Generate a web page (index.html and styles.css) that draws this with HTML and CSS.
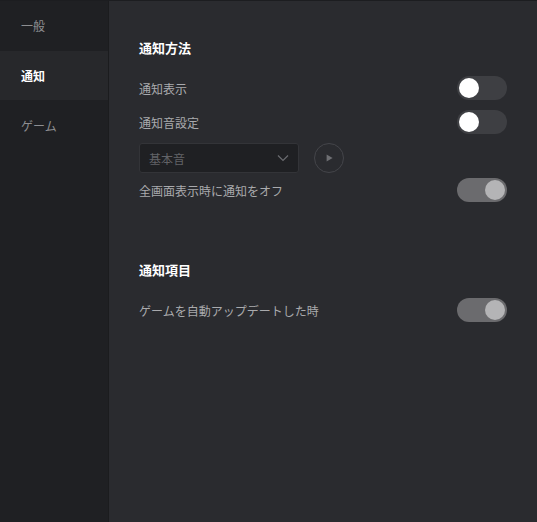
FILE: index.html
```html
<!DOCTYPE html>
<html lang="ja">
<head>
<meta charset="UTF-8" />
<meta name="viewport" content="width=device-width, initial-scale=1" />
<title>設定</title>
<link rel="stylesheet" href="styles.css">
</head>
<body>

<div class="app">
  <div class="sidebar">
    <div class="nav-item">一般</div>
    <div class="nav-item active">通知</div>
    <div class="nav-item">ゲーム</div>
  </div>

  <div class="main">
    <div class="section">
      <div class="section-title">通知方法</div>
      <div class="row">
        <span class="label">通知表示</span>
        <div class="toggle"><div class="knob"></div></div>
      </div>
      <div class="row">
        <span class="label">通知音設定</span>
        <div class="toggle"><div class="knob"></div></div>
      </div>
      <div class="sound-row">
        <div class="select">
          <span>基本音</span>
          <svg viewBox="0 0 12 8" class="chevron">
            <path d="M1 1.5l5 5 5-5" fill="none" stroke="#6a6b6f" stroke-width="1.2"/>
          </svg>
        </div>
        <div class="play">
          <svg viewBox="0 0 10 10">
            <path d="M3 2v6l5-3z" fill="#6e6f73"/>
          </svg>
        </div>
      </div>
      <div class="row">
        <span class="label">全画面表示時に通知をオフ</span>
        <div class="toggle on"><div class="knob"></div></div>
      </div>
    </div>

    <div class="section">
      <div class="section-title">通知項目</div>
      <div class="row">
        <span class="label">ゲームを自動アップデートした時</span>
        <div class="toggle on"><div class="knob"></div></div>
      </div>
    </div>
  </div>
</div>

</body>
</html>
```

FILE: styles.css
```css
body {
  margin: 0;
  background-color: #2a2b2f;
  font-family: "Noto Sans CJK JP", "Noto Sans", sans-serif;
  color: #a9aaad;
}
.app {
  display: flex;
  height: 522px;
  border-top: 1px solid #1c1d20;
  box-sizing: border-box;
}
.sidebar {
  width: 108px;
  background: #1f2023;
  border-right: 1px solid #1b1c1e;
  display: flex;
  flex-direction: column;
  gap: 1px;
}
.nav-item {
  height: 49px;
  padding-left: 21px;
  display: flex;
  align-items: center;
  font-size: 12px;
  color: #8d8e91;
}
.nav-item.active {
  background: #27282b;
  color: #ffffff;
  font-weight: 700;
}
.main {
  flex: 1;
  padding: 37px 30px 0 30px;
}
.section {
  display: flex;
  flex-direction: column;
  margin-bottom: 53px;
}
.section-title {
  font-size: 13px;
  font-weight: 700;
  color: #ffffff;
  margin-bottom: 14px;
}
.row {
  display: flex;
  justify-content: space-between;
  align-items: center;
  height: 34px;
}
.label {
  font-size: 12px;
  color: #a9aaad;
}
.toggle {
  width: 50px;
  height: 24px;
  border-radius: 12px;
  background: #3e3f43;
  display: flex;
  align-items: center;
  padding: 0 2px;
  box-sizing: border-box;
}
.knob {
  width: 20px;
  height: 20px;
  border-radius: 50%;
  background: #ffffff;
}
.toggle.on {
  background: #6b6b6e;
  justify-content: flex-end;
}
.toggle.on .knob {
  background: #b4b4b6;
}
.sound-row {
  display: flex;
  align-items: center;
  gap: 15px;
  height: 30px;
  margin-top: 4px;
}
.select {
  width: 160px;
  height: 30px;
  box-sizing: border-box;
  background: #1f2023;
  border: 1px solid #333438;
  border-radius: 3px;
  display: flex;
  align-items: center;
  justify-content: space-between;
  padding: 0 9px;
  font-size: 12px;
  color: #626367;
}
.chevron {
  width: 12px;
  height: 8px;
}
.play {
  width: 30px;
  height: 30px;
  border-radius: 50%;
  border: 1px solid #44454a;
  box-sizing: border-box;
  display: flex;
  align-items: center;
  justify-content: center;
}
.play svg {
  width: 12px;
  height: 12px;
}
```
